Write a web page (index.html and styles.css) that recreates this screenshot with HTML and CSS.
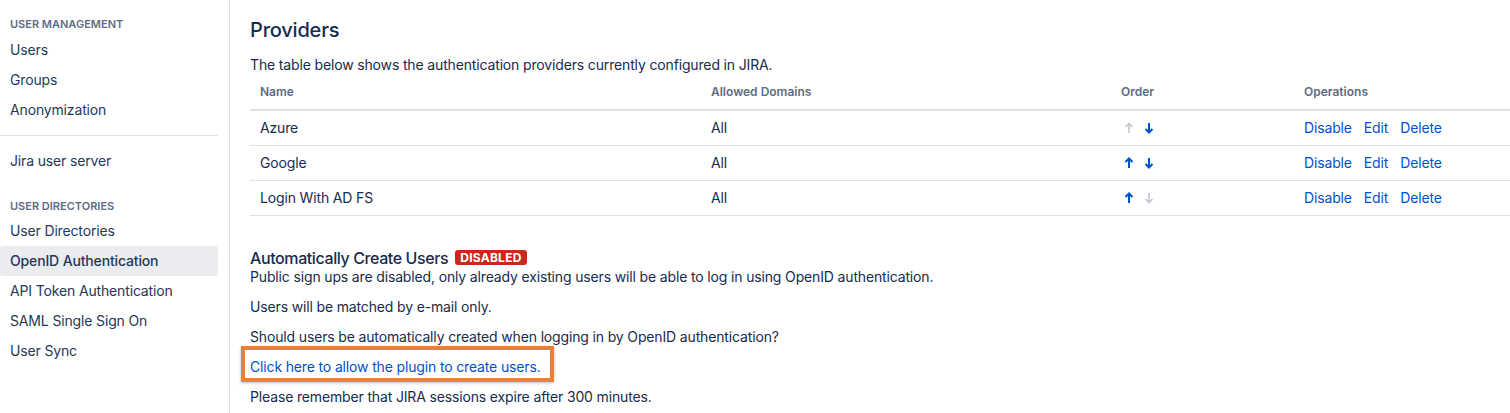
FILE: index.html
```html
<!DOCTYPE html>
<html lang="en">
<head>
<meta charset="utf-8">
<title>OpenID Authentication</title>
<link rel="stylesheet" href="styles.css">
</head>
<body>
<div class="page">
  <nav class="sidebar">
    <div class="nav-heading first">User management</div>
    <a class="nav-item">Users</a>
    <a class="nav-item">Groups</a>
    <a class="nav-item">Anonymization</a>
    <hr class="nav-sep">
    <a class="nav-item">Jira user server</a>
    <div class="nav-heading">User directories</div>
    <a class="nav-item">User Directories</a>
    <a class="nav-item active">OpenID Authentication</a>
    <a class="nav-item">API Token Authentication</a>
    <a class="nav-item">SAML Single Sign On</a>
    <a class="nav-item">User Sync</a>
  </nav>
  <main class="content">
    <h2 class="title">Providers</h2>
    <p class="desc">The table below shows the authentication providers currently configured in JIRA.</p>
    <table class="providers">
      <colgroup>
        <col class="c-name"><col class="c-dom"><col class="c-order"><col class="c-ops">
      </colgroup>
      <thead>
        <tr><th>Name</th><th>Allowed Domains</th><th>Order</th><th>Operations</th></tr>
      </thead>
      <tbody>
        <tr>
          <td>Azure</td><td>All</td>
          <td class="order">
            <svg class="arr off" viewBox="0 0 10 12"><path d="M5 11V2M1.5 5L5 1.5 8.5 5"/></svg>
            <svg class="arr" viewBox="0 0 10 12"><path d="M5 1v9M1.5 7L5 10.5 8.5 7"/></svg>
          </td>
          <td class="ops"><a>Disable</a><a>Edit</a><a>Delete</a></td>
        </tr>
        <tr>
          <td>Google</td><td>All</td>
          <td class="order">
            <svg class="arr" viewBox="0 0 10 12"><path d="M5 11V2M1.5 5L5 1.5 8.5 5"/></svg>
            <svg class="arr" viewBox="0 0 10 12"><path d="M5 1v9M1.5 7L5 10.5 8.5 7"/></svg>
          </td>
          <td class="ops"><a>Disable</a><a>Edit</a><a>Delete</a></td>
        </tr>
        <tr>
          <td>Login With AD FS</td><td>All</td>
          <td class="order">
            <svg class="arr" viewBox="0 0 10 12"><path d="M5 11V2M1.5 5L5 1.5 8.5 5"/></svg>
            <svg class="arr off" viewBox="0 0 10 12"><path d="M5 1v9M1.5 7L5 10.5 8.5 7"/></svg>
          </td>
          <td class="ops"><a>Disable</a><a>Edit</a><a>Delete</a></td>
        </tr>
      </tbody>
    </table>
    <h3 class="subtitle">Automatically Create Users <span class="lozenge">Disabled</span></h3>
    <p class="para first">Public sign ups are disabled, only already existing users will be able to log in using OpenID authentication.</p>
    <p class="para">Users will be matched by e-mail only.</p>
    <p class="para">Should users be automatically created when logging in by OpenID authentication?</p>
    <p class="para link-para"><a class="highlight">Click here to allow the plugin to create users.</a></p>
    <p class="para">Please remember that JIRA sessions expire after 300 minutes.</p>
  </main>
</div>
</body>
</html>
```

FILE: styles.css
```css
* { box-sizing: border-box; }
html, body { margin: 0; padding: 0; background: #fff; }
body {
  font-family: Inter, "Noto Sans", "Liberation Sans", sans-serif;
  font-size: 14px;
  line-height: 20px;
  letter-spacing: -0.15px;
  color: #172b4d;
}
.page { display: flex; align-items: stretch; min-height: 413px; }
.sidebar {
  width: 230px;
  flex: none;
  padding: 16px 11px 0 0;
  border-right: 1px solid #dfe1e6;
  display: flex;
  flex-direction: column;
}
.nav-heading {
  font-size: 11px;
  font-weight: 600;
  line-height: 16px;
  text-transform: uppercase;
  color: #5e6c84;
  padding-left: 10px;
  margin: 22px 0 2px;
  letter-spacing: 0;
}
.nav-heading.first { margin: 0 0 3px; }
.nav-item {
  display: block;
  height: 30px;
  line-height: 30px;
  padding-left: 10px;
  border-radius: 3px;
  color: #253858;
  font-size: 14px;
  white-space: nowrap;
}
.nav-item.active { background: #ebecf0; font-weight: 500; }
.nav-sep { border: 0; border-top: 1px solid #dfe1e6; margin: 10px 0; height: 0; }
.content { flex: 1; padding: 18px 0 0 20px; min-width: 0; }
.title {
  margin: 0;
  font-size: 20px;
  line-height: 24px;
  font-weight: 500;
  letter-spacing: -0.2px;
  color: #172b4d;
}
.desc { margin: 13px 0 0; }
.providers {
  width: 100%;
  border-collapse: collapse;
  table-layout: fixed;
}
.c-name { width: 451px; }
.c-dom { width: 410px; }
.c-order { width: 183px; }
.c-ops { width: auto; }
.providers th {
  text-align: left;
  font-size: 12px;
  font-weight: 600;
  color: #5e6c84;
  height: 35px;
  padding: 0 10px;
  border-bottom: 2px solid #dfe1e6;
  letter-spacing: 0;
}
.providers td {
  height: 35px;
  padding: 0 10px;
  border-bottom: 1px solid #dfe1e6;
  vertical-align: middle;
}
.order { white-space: nowrap; }
.arr {
  width: 10px;
  height: 12px;
  fill: none;
  stroke: #0052cc;
  stroke-width: 2;
  margin: 0 3px 0 3px;
  vertical-align: -1px;
}
.arr.off { stroke: #c1c7d0; stroke-width: 1.6; }
.ops a { color: #0052cc; margin-right: 12px; }
.subtitle {
  margin: 32px 0 0;
  font-size: 16px;
  line-height: 20px;
  font-weight: 500;
  letter-spacing: -0.4px;
  display: flex;
  align-items: center;
  gap: 7px;
}
.lozenge {
  display: inline-block;
  background: #c9281b;
  color: #fff;
  font-size: 12px;
  font-weight: 700;
  line-height: 15px;
  padding: 0 5px;
  border-radius: 3px;
  text-transform: uppercase;
  letter-spacing: 0.02em;
}
.para { margin: 10px 0 0; }
.para.first { margin-top: -1px; }
.link-para { margin-top: 10px; }
.highlight {
  position: relative;
  display: inline-block;
  color: #0052cc;
}
.highlight::after {
  content: "";
  position: absolute;
  top: -11px;
  bottom: -5px;
  left: -9px;
  right: -13px;
  border: 4px solid #e8803a;
  box-shadow: 0 1px 3px rgba(0, 0, 0, 0.25);
}
```
